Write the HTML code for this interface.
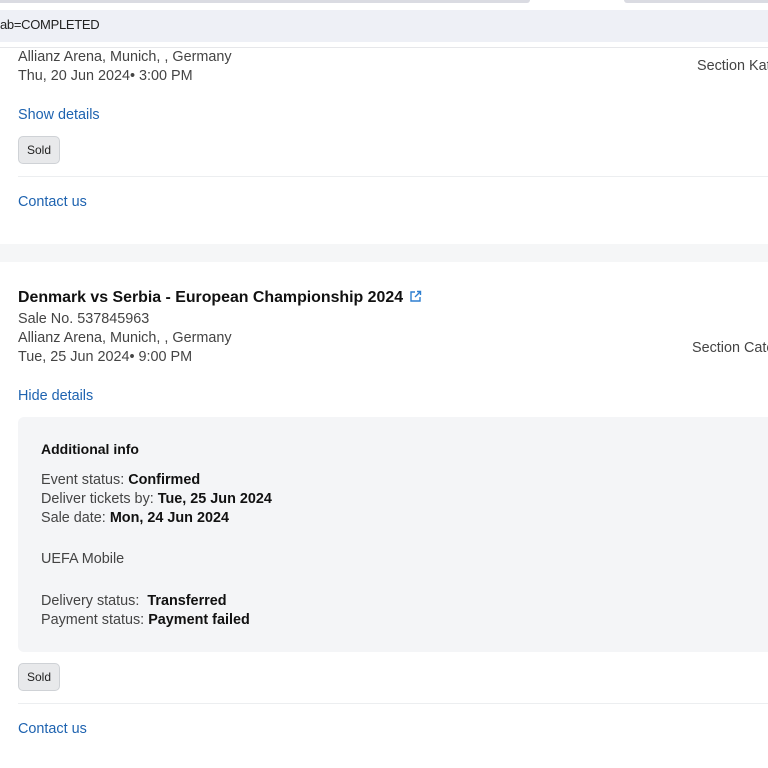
<!DOCTYPE html>
<html><head><style>
*{margin:0;padding:0;box-sizing:border-box}
body{width:768px;height:768px;overflow:hidden;background:#fff;font-family:"Liberation Sans",Arial,sans-serif;font-size:14.4px;color:#444;position:relative}
.a{position:absolute;white-space:nowrap}
.link{color:#1e63b0}
.b{color:#111;font-weight:bold}
.sold{position:absolute;left:18px;width:42px;height:28px;border:1px solid #cfd2d6;background:#e8e9eb;border-radius:5px;font-size:12px;color:#222;text-align:center;line-height:26px}
.hr{position:absolute;left:18px;right:0;height:1px;background:#eceef0}
</style></head><body>
<div class="a" style="left:0;top:0;width:530px;height:3px;background:#dadbe2;border-radius:0 0 6px 0"></div>
<div class="a" style="left:624px;top:0;width:144px;height:3px;background:#dadbe2;border-radius:0 0 0 6px"></div>
<div class="a" style="left:0;top:10px;width:768px;height:32px;background:#eef0f6"></div>
<div class="a" style="left:0;top:17px;font-size:13px;color:#222;letter-spacing:-0.3px">ab=COMPLETED</div>
<div class="a" style="left:0;top:47px;width:768px;height:1px;background:#e6e7ea"></div>

<div class="a" style="left:18px;top:49px">Allianz Arena, Munich, , Germany</div>
<div class="a" style="left:18px;top:68px">Thu, 20 Jun 2024• 3:00 PM</div>
<div class="a" style="left:697px;top:58px">Section Kat</div>
<div class="a link" style="left:18px;top:107px">Show details</div>
<div class="sold" style="top:136px">Sold</div>
<div class="hr" style="top:176px"></div>
<div class="a link" style="left:18px;top:194px">Contact us</div>

<div class="a" style="left:0;top:244px;width:768px;height:18px;background:#f5f6f7"></div>

<div class="a b" style="left:18px;top:289px;font-size:15.9px">Denmark vs Serbia - European Championship 2024</div>
<svg class="a" style="left:409px;top:290px" width="13" height="13" viewBox="0 0 13 13" fill="none" stroke="#2f7fd0" stroke-width="1.4"><path d="M6 2H2v9h9V7"/><path d="M8 1.5h3.5V5M11.5 1.5L6 7"/></svg>
<div class="a" style="left:18px;top:311px">Sale No. 537845963</div>
<div class="a" style="left:18px;top:330px">Allianz Arena, Munich, , Germany</div>
<div class="a" style="left:18px;top:349px">Tue, 25 Jun 2024• 9:00 PM</div>
<div class="a" style="left:692px;top:340px">Section Cate</div>
<div class="a link" style="left:18px;top:388px">Hide details</div>

<div class="a" style="left:18px;top:417px;width:760px;height:235px;background:#f4f5f7;border-radius:6px"></div>
<div class="a b" style="left:41px;top:441px;font-size:14px">Additional info</div>
<div class="a" style="left:41px;top:472px">Event status: <span class="b">Confirmed</span></div>
<div class="a" style="left:41px;top:491px">Deliver tickets by: <span class="b">Tue, 25 Jun 2024</span></div>
<div class="a" style="left:41px;top:510px">Sale date: <span class="b">Mon, 24 Jun 2024</span></div>
<div class="a" style="left:41px;top:551px">UEFA Mobile</div>
<div class="a" style="left:41px;top:593px">Delivery status:&nbsp; <span class="b">Transferred</span></div>
<div class="a" style="left:41px;top:612px">Payment status: <span class="b">Payment failed</span></div>

<div class="sold" style="top:663px">Sold</div>
<div class="hr" style="top:703px"></div>
<div class="a link" style="left:18px;top:721px">Contact us</div>
</body></html>
